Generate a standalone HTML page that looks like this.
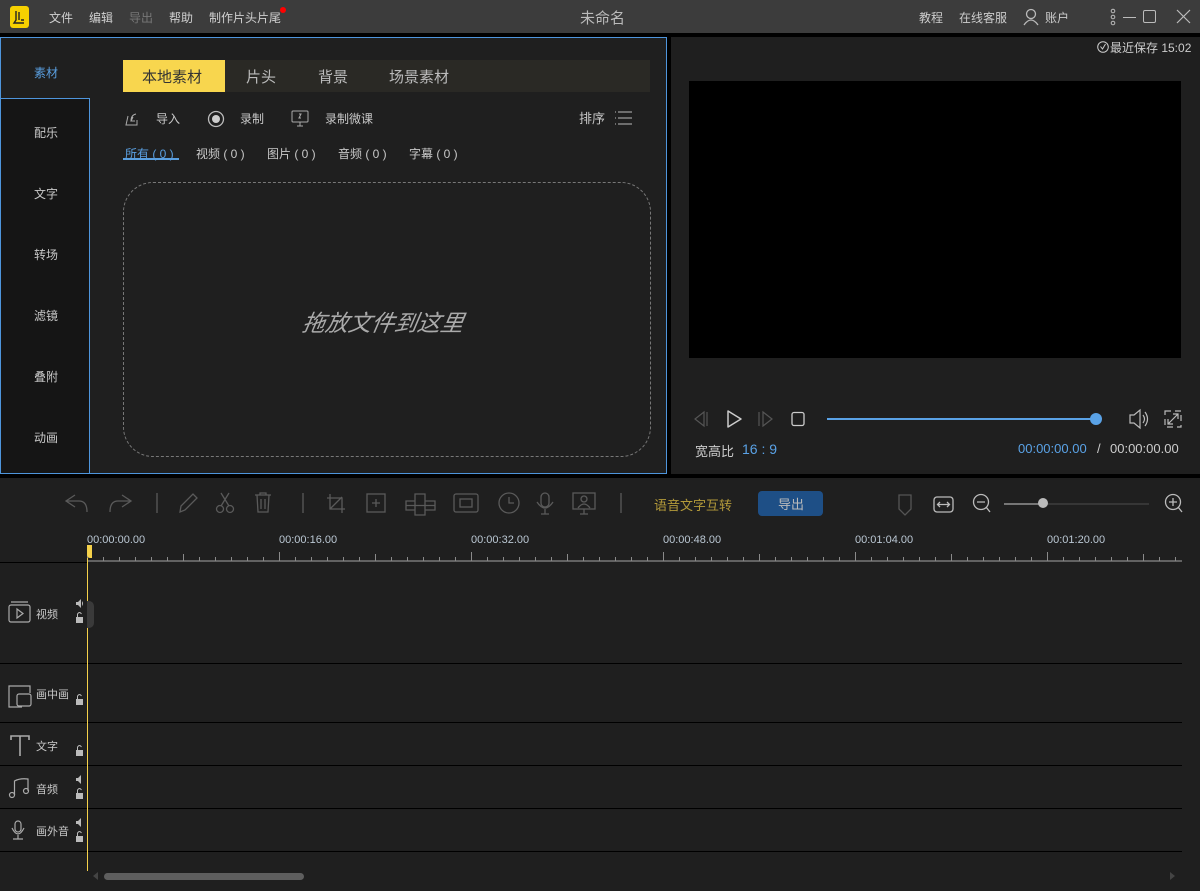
<!DOCTYPE html>
<html><head><meta charset="utf-8">
<style>
*{margin:0;padding:0;box-sizing:border-box}
body{width:1200px;height:891px;background:#000;font-family:"Liberation Sans","Noto Sans CJK SC",sans-serif;color:#c8c8c8;position:relative;overflow:hidden;font-size:12px}
.a{position:absolute}
.t{white-space:nowrap}
svg{position:absolute;overflow:visible}
</style></head><body>
<!-- title bar -->
<div class="a" style="left:0;top:0;width:1200px;height:33px;background:#3c3c3c"></div>
<div class="a" style="left:10px;top:6px;width:19px;height:22px;background:#f6d000;border-radius:3px"></div>
<svg style="left:10px;top:6px" width="19" height="22"><path d="M6 5 L6 14 L4 17 L14 17 M9 6 L9 14 M11 14 L14 14" stroke="#222" stroke-width="1.4" fill="none"/></svg>
<div class="a t" style="left:49px;top:9px;font-size:12px;color:#d0d0d0">文件</div>
<div class="a t" style="left:89px;top:9px;color:#d0d0d0">编辑</div>
<div class="a t" style="left:129px;top:9px;color:#777">导出</div>
<div class="a t" style="left:169px;top:9px;color:#d0d0d0">帮助</div>
<div class="a t" style="left:209px;top:9px;color:#d0d0d0">制作片头片尾</div>
<div class="a" style="left:280px;top:7px;width:6px;height:6px;background:#f00;border-radius:50%"></div>
<div class="a t" style="left:580px;top:7px;font-size:15px;color:#bbb">未命名</div>
<div class="a t" style="left:919px;top:9px;color:#ccc">教程</div>
<div class="a t" style="left:959px;top:9px;color:#ccc">在线客服</div>
<svg style="left:1022px;top:8px" width="18" height="18"><circle cx="9" cy="6" r="4.5" stroke="#bbb" stroke-width="1.3" fill="none"/><path d="M2 17 Q9 7 16 17" stroke="#bbb" stroke-width="1.3" fill="none"/></svg>
<div class="a t" style="left:1045px;top:9px;color:#ccc">账户</div>
<svg style="left:1110px;top:8px" width="6" height="18"><circle cx="3" cy="3" r="1.8" stroke="#bbb" fill="none"/><circle cx="3" cy="9" r="1.8" stroke="#bbb" fill="none"/><circle cx="3" cy="15" r="1.8" stroke="#bbb" fill="none"/></svg>
<div class="a" style="left:1123px;top:17px;width:13px;height:1px;background:#bbb"></div>
<div class="a" style="left:1143px;top:10px;width:13px;height:13px;border:1.3px solid #bbb;border-radius:2px"></div>
<svg style="left:1177px;top:10px" width="13" height="13"><path d="M0 0 L13 13 M13 0 L0 13" stroke="#bbb" stroke-width="1.2"/></svg>

<!-- left panel -->
<div class="a" style="left:0;top:37px;width:667px;height:437px;background:#1f1f1f;border:1px solid #4e95dc"></div>
<div class="a" style="left:1px;top:98px;width:89px;height:375px;background:#151515;border-top:1px solid #4e95dc;border-right:1px solid #4e95dc"></div>
<div class="a t" style="left:34px;top:64px;color:#5a9fe0">素材</div>
<div class="a t" style="left:34px;top:124px">配乐</div>
<div class="a t" style="left:34px;top:185px">文字</div>
<div class="a t" style="left:34px;top:246px">转场</div>
<div class="a t" style="left:34px;top:307px">滤镜</div>
<div class="a t" style="left:34px;top:368px">叠附</div>
<div class="a t" style="left:34px;top:429px">动画</div>

<div class="a" style="left:123px;top:60px;width:527px;height:32px;background:#2a2925"></div>
<div class="a" style="left:123px;top:60px;width:102px;height:32px;background:#f8d64e"></div>
<div class="a t" style="left:142px;top:66px;font-size:15px;color:#333">本地素材</div>
<div class="a t" style="left:246px;top:66px;font-size:15px;color:#bbb">片头</div>
<div class="a t" style="left:318px;top:66px;font-size:15px;color:#bbb">背景</div>
<div class="a t" style="left:389px;top:66px;font-size:15px;color:#bbb">场景素材</div>

<svg style="left:124px;top:111px" width="16" height="16"><path d="M4 5 L2 14 L13 14 L13 9 M7 10 Q7 4 12 3 M9 6 L7 10 L11 10" stroke="#aaa" stroke-width="1" fill="none"/></svg>
<div class="a t" style="left:156px;top:110px">导入</div>
<svg style="left:207px;top:110px" width="18" height="18"><circle cx="9" cy="9" r="7.5" stroke="#bbb" stroke-width="1.3" fill="none"/><circle cx="9" cy="9" r="4" fill="#ccc"/></svg>
<div class="a t" style="left:240px;top:110px">录制</div>
<svg style="left:291px;top:110px" width="18" height="18"><rect x="1" y="1" width="16" height="11" rx="1" stroke="#aaa" fill="none"/><path d="M9 12 L9 16 M6 16 L12 16 M8 4 L10 4 L8 8 L10 8" stroke="#aaa" fill="none"/></svg>
<div class="a t" style="left:325px;top:110px">录制微课</div>
<div class="a t" style="left:579px;top:108px;font-size:13px">排序</div>
<svg style="left:615px;top:111px" width="18" height="14"><path d="M3 1 H17 M3 7 H17 M3 13 H17 M0 1 H1 M0 7 H1 M0 13 H1" stroke="#bbb" stroke-width="1"/></svg>

<div class="a t" style="left:125px;top:145px;color:#5a9fe0">所有 ( 0 )</div>
<div class="a" style="left:123px;top:158px;width:56px;height:2px;background:#5a9fe0"></div>
<div class="a t" style="left:196px;top:145px">视频 ( 0 )</div>
<div class="a t" style="left:267px;top:145px">图片 ( 0 )</div>
<div class="a t" style="left:338px;top:145px">音频 ( 0 )</div>
<div class="a t" style="left:409px;top:145px">字幕 ( 0 )</div>

<div class="a" style="left:123px;top:182px;width:528px;height:275px;border:1px dashed #777;border-radius:30px"></div>
<div class="a t" style="left:303px;top:304px;font-size:23px;font-style:italic;color:#aaa;transform:skewX(-10deg)">拖放文件到这里</div>

<!-- right panel -->
<div class="a" style="left:671px;top:37px;width:529px;height:437px;background:#1f1f1f"></div>
<svg style="left:1097px;top:41px" width="12" height="12"><circle cx="6" cy="6" r="5.3" stroke="#ccc" fill="none"/><path d="M3.5 5.5 L5.5 8 L8.5 3" stroke="#ccc" fill="none"/></svg>
<div class="a t" style="left:1110px;top:39px;color:#ccc">最近保存 15:02</div>
<div class="a" style="left:689px;top:81px;width:492px;height:277px;background:#000"></div>
<svg style="left:693px;top:410px" width="120" height="18"><path d="M11 2 L2 9 L11 16 Z M14 2 V16" stroke="#555" stroke-width="1.2" fill="none"/><path d="M35 1 L48 9 L35 17 Z" stroke="#ccc" stroke-width="1.5" fill="none" stroke-linejoin="round"/><path d="M66 2 V16 M70 2 L79 9 L70 16 Z" stroke="#555" stroke-width="1.2" fill="none"/><rect x="99" y="2.5" width="12" height="13" rx="2" stroke="#ccc" stroke-width="1.3" fill="none"/></svg>
<div class="a" style="left:827px;top:418px;width:269px;height:2px;background:#5aa2e6"></div>
<div class="a" style="left:1090px;top:413px;width:12px;height:12px;background:#5aa2e6;border-radius:50%"></div>
<svg style="left:1128px;top:408px" width="50" height="22"><path d="M2 7 H6 L12 2 V20 L6 15 H2 Z" stroke="#bbb" stroke-width="1.2" fill="none"/><path d="M15 7 Q18 11 15 15 M17 4 Q22 11 17 18" stroke="#bbb" stroke-width="1.2" fill="none"/><rect x="37" y="3" width="16" height="16" stroke="#bbb" stroke-width="1.2" fill="none" stroke-dasharray="6 4"/><path d="M40 16 L50 6 M45 6 H50 V11 M40 11 V16 H45" stroke="#bbb" stroke-width="1.2" fill="none"/></svg>
<div class="a t" style="left:695px;top:441px;font-size:13px;color:#ccc">宽高比</div>
<div class="a t" style="left:742px;top:441px;font-size:14px;color:#5aa2e6">16 : 9</div>
<div class="a t" style="left:1018px;top:441px;font-size:13px;color:#5aa2e6">00:00:00.00</div>
<div class="a t" style="left:1097px;top:441px;font-size:13px;color:#ccc">/</div>
<div class="a t" style="left:1110px;top:441px;font-size:13px;color:#ccc">00:00:00.00</div>

<!-- timeline -->
<div class="a" style="left:0;top:478px;width:1200px;height:413px;background:#1f1f1f"></div>
<svg style="left:0;top:480px" width="1200" height="50" fill="none" stroke="#5a5a5a" stroke-width="1.3">
<path d="M75 15 L66 21 L75 27 M66 21 H79 Q87 21 87 32"/>
<path d="M122 15 L131 21 L122 27 M131 21 H118 Q110 21 110 32"/>
<path d="M157 13 V33"/>
<path d="M180 32 L181 26 L193 14 L197 18 L185 30 Z"/>
<circle cx="220" cy="29" r="3.5"/><circle cx="230" cy="29" r="3.5"/><path d="M221 26 L229 13 M229 26 L221 13"/>
<path d="M255 15 H271 M260 15 V13 H266 V15 M257 15 L258 32 H268 L269 15 M261 19 V29 M265 19 V29"/>
<path d="M303 13 V33"/>
<path d="M330 14 V29 H345 M327 18 H342 V33 M330 29 L342 17"/>
<rect x="367" y="14" width="18" height="18"/><path d="M372 23 H380 M376 19 V27"/>
<path d="M415 14 H425 V21 H435 V30 H425 V35 H415 V30 H406 V21 H415 Z M415 21 V30 M425 21 V30 M406 25.5 H435"/>
<rect x="454" y="14" width="24" height="18" rx="2"/><rect x="460" y="19" width="12" height="8"/>
<circle cx="509" cy="23" r="10"/><path d="M509 17 V23 H514"/>
<rect x="541" y="13" width="8" height="14" rx="4"/><path d="M537 22 Q545 34 553 22 M545 29 V34 M541 34 H549"/>
<rect x="573" y="13" width="22" height="16"/><circle cx="584" cy="19" r="3"/><path d="M578 28 Q584 20 590 28 M584 29 V34 M580 34 H588"/>
<path d="M621 13 V33"/>
</svg>
<div class="a t" style="left:654px;top:495px;font-size:13px;color:#b39a3a">语音文字互转</div>
<div class="a" style="left:758px;top:491px;width:65px;height:25px;background:#1e4f86;border-radius:4px"></div>
<div class="a t" style="left:778px;top:494px;font-size:13px;color:#bbb">导出</div>
<svg style="left:898px;top:492px" width="290" height="24" fill="none" stroke="#bbb" stroke-width="1.3">
<path d="M1 3 H13 V17 L7 23 L1 17 Z" stroke="#555"/>
<rect x="36" y="5" width="19" height="15" rx="3"/><path d="M40 12.5 H51 M42 10 L39.5 12.5 L42 15 M49 10 L51.5 12.5 L49 15"/>
<circle cx="83" cy="10" r="7.5"/><path d="M79 10 H87 M88 15 L92 20"/>
<path d="M106 12 H142" stroke="#aaa"/><path d="M148 12 H251" stroke="#444"/>
<circle cx="275" cy="10" r="7.5"/><path d="M271 10 H279 M275 6 V14 M280 15 L284 20"/>
</svg>
<div class="a" style="left:1038px;top:498px;width:10px;height:10px;background:#bbb;border-radius:50%"></div>

<div class="a t" style="left:87px;top:534px;font-size:11px;color:#bbc8d4">00:00:00.00</div>
<div class="a t" style="left:279px;top:534px;font-size:11px;color:#bbc8d4">00:00:16.00</div>
<div class="a t" style="left:471px;top:534px;font-size:11px;color:#bbc8d4">00:00:32.00</div>
<div class="a t" style="left:663px;top:534px;font-size:11px;color:#bbc8d4">00:00:48.00</div>
<div class="a t" style="left:855px;top:534px;font-size:11px;color:#bbc8d4">00:01:04.00</div>
<div class="a t" style="left:1047px;top:534px;font-size:11px;color:#bbc8d4">00:01:20.00</div>
<svg style="left:0;top:540px" width="1200" height="30" id="rul"></svg>
<script>
(function(){var s='<path d="M87 21 H1182" stroke="#8a8a8a" stroke-width="1.2"/>';var p='';
for(var x=87;x<=1182;x+=16){var k=(x-87)%192,h=k==0?9:(k==96?7:4);p+='M'+(x+0.5)+' '+(21-h)+' V21 ';}
s+='<path d="'+p+'" stroke="#8a8a8a" stroke-width="1"/>';document.getElementById('rul').innerHTML=s;})();
</script>
<div class="a" style="left:0;top:562px;width:87px;height:1px;background:#000"></div>
<div class="a" style="left:0;top:663px;width:1182px;height:1px;background:#000"></div>
<div class="a" style="left:0;top:722px;width:1182px;height:1px;background:#000"></div>
<div class="a" style="left:0;top:765px;width:1182px;height:1px;background:#000"></div>
<div class="a" style="left:0;top:808px;width:1182px;height:1px;background:#000"></div>
<div class="a" style="left:0;top:851px;width:1182px;height:1px;background:#000"></div>
<!-- playhead -->
<div class="a" style="left:87px;top:545px;width:5px;height:13px;background:#f5d14a;border-radius:0 0 0 3px"></div>
<div class="a" style="left:87px;top:558px;width:1px;height:313px;background:#f5d14a"></div>
<div class="a" style="left:87px;top:601px;width:7px;height:27px;background:#3a3a3a;border-radius:0 5px 5px 0"></div>

<!-- track headers -->
<svg style="left:8px;top:600px" width="80" height="250" fill="none" stroke="#aaa" stroke-width="1.2">
<rect x="1" y="5" width="21" height="17" rx="2"/><path d="M3 2 H20"/><path d="M9 9 L15 13.5 L9 18 Z"/>
<path d="M1 98 V86 H22 V93 M14 107 H1 V98" /><rect x="9" y="94" width="14" height="12" rx="2"/>
<path d="M3 140 V136 H21 V140 M12 136 V156" stroke-width="1.6"/>
<circle cx="4" cy="195" r="2.5"/><circle cx="18" cy="191" r="2.5"/><path d="M6.5 195 V181 Q12 178 20 179 V191"/>
<rect x="7" y="221" width="6" height="11" rx="3"/><path d="M4 228 Q10 240 16 228 M10 235 V239 M5 239 H15"/>
</svg>
<div class="a t" style="left:36px;top:606px;font-size:11px">视频</div>
<div class="a t" style="left:36px;top:686px;font-size:11px">画中画</div>
<div class="a t" style="left:36px;top:738px;font-size:11px">文字</div>
<div class="a t" style="left:36px;top:781px;font-size:11px">音频</div>
<div class="a t" style="left:36px;top:823px;font-size:11px">画外音</div>
<svg style="left:75px;top:598px" width="12" height="250" fill="#bbb">
<path d="M1 4 H3 L6 1 V10 L3 7 H1 Z M7 3 Q9 5.5 7 8" /><path d="M2.5 19 V16 Q4.5 13 6.5 16" stroke="#bbb" fill="none"/><rect x="1" y="19" width="7" height="6"/>
<rect x="1" y="101" width="7" height="6"/><path d="M2.5 101 V98 Q4.5 95 6.5 98" stroke="#bbb" fill="none"/>
<rect x="1" y="152" width="7" height="6"/><path d="M2.5 152 V149 Q4.5 146 6.5 149" stroke="#bbb" fill="none"/>
<path d="M1 180 H3 L6 177 V186 L3 183 H1 Z"/><rect x="1" y="195" width="7" height="6"/><path d="M2.5 195 V192 Q4.5 189 6.5 192" stroke="#bbb" fill="none"/>
<path d="M1 223 H3 L6 220 V229 L3 226 H1 Z"/><rect x="1" y="238" width="7" height="6"/><path d="M2.5 238 V235 Q4.5 232 6.5 235" stroke="#bbb" fill="none"/>
</svg>
<!-- scrollbar -->
<svg style="left:93px;top:872px" width="6" height="8"><path d="M5 0 L0 4 L5 8 Z" fill="#444"/></svg>
<div class="a" style="left:104px;top:873px;width:200px;height:7px;background:#5e5e5e;border-radius:4px"></div>
<svg style="left:1170px;top:872px" width="6" height="8"><path d="M0 0 L5 4 L0 8 Z" fill="#444"/></svg>
</body></html>
